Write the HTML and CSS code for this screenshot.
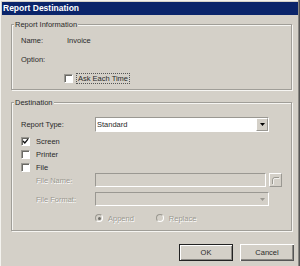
FILE: index.html
```html
<!DOCTYPE html>
<html lang="en">
<head>
    <meta charset="UTF-8">
    <title>Report Destination</title>
    <link rel="stylesheet" href="styles.css">
</head>
<body>
    <div class="window">
        <div class="titlebar">Report Destination</div>

        <div class="content">
            <fieldset class="group">
                <legend>Report Information</legend>
                <div class="group-body info-body">
                    <div class="info-row">
                        <span class="info-label">Name:</span>
                        <span>Invoice</span>
                    </div>
                    <div class="info-row">
                        <span class="info-label">Option:</span>
                    </div>
                    <div class="info-row ask-row">
                        <span class="check"></span>
                        <span class="focus">Ask Each Time</span>
                    </div>
                </div>
            </fieldset>

            <fieldset class="group dest-group">
                <legend>Destination</legend>
                <div class="group-body dest-body">
                    <div class="field-row type-row">
                        <span class="field-label">Report Type:</span>
                        <div class="combo">
                            <span class="combo-text">Standard</span>
                            <span class="combo-btn">
                                <svg width="5" height="3" viewBox="0 0 5 3"><polygon points="0,0 5,0 2.5,3" fill="#000"/></svg>
                            </span>
                        </div>
                    </div>

                    <div class="check-row screen-row">
                        <span class="check">
                            <svg width="7" height="7" viewBox="0 0 7 7"><polyline points="1,3 2.8,5 6,1.2" fill="none" stroke="#111" stroke-width="1.3"/></svg>
                        </span>
                        Screen
                    </div>
                    <div class="check-row">
                        <span class="check"></span>
                        Printer
                    </div>
                    <div class="check-row file-row">
                        <span class="check"></span>
                        File
                    </div>

                    <div class="field-row sub-row">
                        <span class="field-label sub disabled">File Name:</span>
                        <div class="edit"></div>
                        <span class="browse-btn">
                            <svg width="11" height="11" viewBox="0 0 11 11">
                                <path d="M2.5 9 V5 Q2.5 2.5 5 2.5 H9" fill="none" stroke="#fff" stroke-width="1" transform="translate(0.7 0.7)"/>
                                <path d="M2.5 9 V5 Q2.5 2.5 5 2.5 H9" fill="none" stroke="#9a9890" stroke-width="1"/>
                            </svg>
                        </span>
                    </div>

                    <div class="field-row sub-row format-row">
                        <span class="field-label sub disabled">File Format:</span>
                        <div class="combo off">
                            <span class="combo-text"></span>
                            <span class="combo-btn flat">
                                <svg width="5" height="3" viewBox="0 0 5 3"><polygon points="0,0 5,0 2.5,3" fill="#9a9890"/></svg>
                            </span>
                        </div>
                    </div>

                    <div class="radio-row">
                        <span class="radio on"></span>
                        <span class="disabled append">Append</span>
                        <span class="radio"></span>
                        <span class="disabled">Replace</span>
                    </div>
                </div>
            </fieldset>

            <div class="buttons">
                <button class="btn default">OK</button>
                <button class="btn">Cancel</button>
            </div>
        </div>
    </div>
</body>
</html>
```

FILE: styles.css
```css
body {
    margin: 0;
    background-color: #d4d0c8;
    font-family: "Liberation Sans", Arial, sans-serif;
    font-size: 7.5px;
    color: #2a2a2a;
}

.window {
    width: 300px;
    height: 266px;
    box-sizing: border-box;
    padding: 2px 2px 0 2px;
    background-color: #d4d0c8;
    box-shadow: inset -1px 0 0 #555, inset -2px 0 0 #8a8883, inset 1px 1px 0 #f4f3ef;
    overflow: hidden;
}

.titlebar {
    height: 13px;
    line-height: 13px;
    padding-left: 1px;
    background-color: #0a246a;
    color: white;
    font-weight: bold;
    font-size: 8.5px;
}

.content {
    padding: 5px 6px 0 9px;
}

/* group boxes */

.group {
    margin: 0;
    padding: 0;
    min-width: 0;
    border: 1px solid #a09e98;
    box-shadow: inset 1px 1px 0 #f6f5f2, 1px 1px 0 #f6f5f2;
}

.group legend {
    margin-left: 2px;
    padding: 0 1px;
    line-height: 9px;
    background-color: #d4d0c8;
}

.dest-group {
    margin-top: 8px;
}

.group-body {
    padding-left: 9px;
}

.info-body {
    padding-top: 5px;
    padding-bottom: 4px;
    display: flex;
    flex-direction: column;
    gap: 6px;
}

.info-row {
    display: flex;
    align-items: center;
    height: 13px;
}

.info-label {
    width: 46px;
}

.ask-row {
    padding-left: 43px;
}

.focus {
    margin-left: 3px;
    padding: 0 1px;
    line-height: 9px;
    border: 1px dotted #555;
}

.dest-body {
    padding-top: 10px;
    padding-bottom: 6px;
}

/* rows */

.field-row {
    display: flex;
    align-items: center;
    height: 14px;
}

.type-row {
    height: 15px;
}

.field-label {
    width: 74px;
    flex-shrink: 0;
}

.field-label.sub {
    box-sizing: border-box;
    padding-left: 15px;
}

.format-row {
    margin-top: 5px;
}

.check-row {
    display: flex;
    align-items: center;
    height: 13px;
}

.screen-row {
    margin-top: 3px;
}

.file-row {
    height: 12px;
}

.check {
    width: 9px;
    height: 9px;
    box-sizing: border-box;
    background: white;
    border-top: 1px solid #9a9892;
    border-left: 1px solid #9a9892;
    border-right: 1px solid #fff;
    border-bottom: 1px solid #fff;
    box-shadow: inset 1px 1px 0 #6a6964;
    margin-right: 6px;
    display: flex;
    align-items: center;
    justify-content: center;
    flex-shrink: 0;
}

.ask-row .check {
    margin-right: 0;
}

.disabled {
    color: #9a9890;
    text-shadow: 0.7px 0.7px 0 #fff;
}

/* inputs */

.combo {
    width: 174px;
    height: 15px;
    box-sizing: border-box;
    display: flex;
    align-items: stretch;
    background: white;
    border-top: 1px solid #9a9892;
    border-left: 1px solid #9a9892;
    border-right: 1px solid #fff;
    border-bottom: 1px solid #fff;
}

.combo-text {
    flex: 1;
    padding-left: 1px;
    line-height: 13px;
}

.combo-btn {
    width: 12px;
    box-sizing: border-box;
    background: #d4d0c8;
    border-top: 1px solid #fff;
    border-left: 1px solid #fff;
    border-right: 1px solid #9a9892;
    border-bottom: 1px solid #9a9892;
    display: flex;
    align-items: center;
    justify-content: center;
}

.combo.off {
    height: 14px;
    background: #d4d0c8;
}

.combo-btn.flat {
    border-color: transparent;
}

.edit {
    width: 171px;
    height: 14px;
    box-sizing: border-box;
    background: #d4d0c8;
    border-top: 1px solid #9a9892;
    border-left: 1px solid #9a9892;
    border-right: 1px solid #fff;
    border-bottom: 1px solid #fff;
}

.browse-btn {
    width: 13px;
    height: 14px;
    margin-left: 3px;
    box-sizing: border-box;
    border-top: 1px solid #fff;
    border-left: 1px solid #fff;
    border-right: 1px solid #9a9892;
    border-bottom: 1px solid #9a9892;
    display: flex;
    align-items: center;
    justify-content: center;
}

.radio-row {
    display: flex;
    align-items: center;
    height: 12px;
    margin-top: 6px;
    padding-left: 74px;
}

.radio {
    width: 8px;
    height: 8px;
    box-sizing: border-box;
    border-radius: 50%;
    border: 1px solid #9a9890;
    border-right-color: #fff;
    border-bottom-color: #fff;
    margin-right: 5px;
    display: flex;
    align-items: center;
    justify-content: center;
}

.radio.on::after {
    content: "";
    width: 3px;
    height: 3px;
    border-radius: 50%;
    background: #6e6d68;
}

.append {
    margin-right: 22px;
}

/* buttons */

.buttons {
    display: flex;
    justify-content: flex-end;
    gap: 7px;
    margin-top: 13px;
    margin-right: -2px;
}

.btn {
    width: 54px;
    height: 17px;
    padding: 0;
    font-family: "Liberation Sans", Arial, sans-serif;
    font-size: 7.5px;
    color: #2a2a2a;
    background: #d4d0c8;
    border: none;
    box-shadow: inset 1px 1px 0 #fff, inset -1px -1px 0 #555, inset -2px -2px 0 #8a8883;
}

.btn.default {
    border: 1px solid #222;
    box-shadow: inset 1px 1px 0 #fff, inset -1px -1px 0 #8a8883;
}
```
